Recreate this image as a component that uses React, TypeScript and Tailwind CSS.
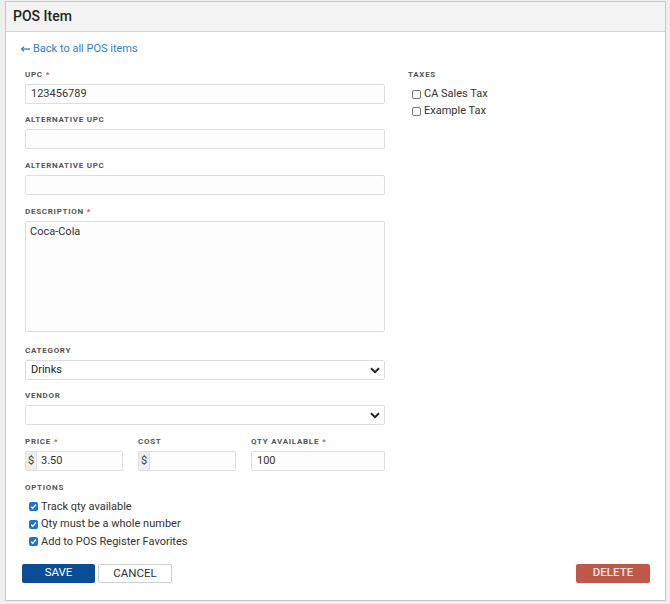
import React from "react";

const Label = ({ children, req }: { children: React.ReactNode; req?: boolean }) => (
  <div className="h-[12px] leading-[12px] text-[8px] font-bold tracking-[0.09em] text-[#555] uppercase">
    {children}
    {req && <span className="text-[#d9534f] ml-[3px]">*</span>}
  </div>
);

const Input = ({ value, className = "" }: { value?: string; className?: string }) => (
  <div
    className={`h-[20px] border border-[#dedede] bg-[#fdfdfd] rounded-[2px] flex items-center px-[5px] text-[11px] text-[#333] ${className}`}
  >
    {value}
  </div>
);

const Chevron = () => (
  <svg width="10" height="7" viewBox="0 0 10 7" className="text-[#222]">
    <path d="M1 1.3 L5 5.2 L9 1.3" fill="none" stroke="currentColor" strokeWidth="2" />
  </svg>
);

const Select = ({ value }: { value?: string }) => (
  <div className="h-[20px] border border-[#dedede] bg-white rounded-[2px] flex items-center justify-between pl-[5px] pr-[4px] text-[11px] text-[#222]">
    <span>{value}</span>
    <Chevron />
  </div>
);

const Checked = () => (
  <span className="w-[9px] h-[9px] rounded-[2px] bg-[#1a73d9] flex items-center justify-center">
    <svg width="7" height="7" viewBox="0 0 8 8">
      <path d="M1.3 4.2 L3.2 6 L6.8 1.8" fill="none" stroke="white" strokeWidth="1.6" />
    </svg>
  </span>
);

const Unchecked = () => (
  <span className="w-[9px] h-[9px] rounded-[2px] border border-[#777] bg-white" />
);

const Money = ({ value, width }: { value?: string; width: string }) => (
  <div className={`h-[20px] flex ${width}`}>
    <div className="w-[12px] h-full bg-[#eeeeee] border border-[#dedede] rounded-l-[2px] flex items-center justify-center text-[11px] text-[#444]">
      $
    </div>
    <div className="flex-1 h-full border border-l-0 border-[#dedede] bg-[#fdfdfd] rounded-r-[2px] flex items-center px-[4px] text-[11px] text-[#333]">
      {value}
    </div>
  </div>
);

export default function App() {
  return (
    <div className="w-[670px] h-[604px] bg-[#efefef] pt-[1px] pl-[5px]" style={{ fontFamily: "Roboto, 'Liberation Sans', sans-serif" }}>
      <div className="w-[661px] h-[600px] bg-white border border-[#c8c8c8] flex flex-col">
        <div className="h-[30px] bg-[#f3f3f3] border-b border-[#d2d2d2] flex items-center pl-[7px] text-[14px] font-medium text-[#222]">
          POS Item
        </div>
        <div className="px-[15px] pt-[10px] flex flex-col flex-1">
          <div className="h-[14px] leading-[14px] text-[11px] text-[#2f7fd0] flex items-center">
            <svg width="9" height="6" viewBox="0 0 9 6" className="mr-[3px]">
              <path d="M0.5 3 H9" stroke="#2f7fd0" strokeWidth="1.3" />
              <path d="M3 0.6 L0.6 3 L3 5.4" fill="none" stroke="#2f7fd0" strokeWidth="1.3" />
            </svg>
            Back to all POS items
          </div>
          <div className="flex mt-[13px] ml-[4px]">
            <div className="w-[360px] flex flex-col">
              <Label req>UPC</Label>
              <Input value="123456789" className="mt-[3px]" />
              <div className="mt-[10px]">
                <Label>Alternative UPC</Label>
                <Input className="mt-[3px]" />
              </div>
              <div className="mt-[11px]">
                <Label>Alternative UPC</Label>
                <Input className="mt-[3px]" />
              </div>
              <div className="mt-[11px]">
                <Label req>Description</Label>
                <div className="mt-[3px] h-[111px] border border-[#dedede] bg-[#fdfdfd] rounded-[2px] px-[4px] pt-[2px] text-[11px] text-[#333]">
                  Coca-Cola
                </div>
              </div>
              <div className="mt-[13px]">
                <Label>Category</Label>
                <div className="mt-[3px]">
                  <Select value="Drinks" />
                </div>
              </div>
              <div className="mt-[10px]">
                <Label>Vendor</Label>
                <div className="mt-[3px]">
                  <Select />
                </div>
              </div>
              <div className="mt-[11px] flex gap-[15px]">
                <div>
                  <Label req>Price</Label>
                  <div className="mt-[3px]">
                    <Money value="3.50" width="w-[98px]" />
                  </div>
                </div>
                <div>
                  <Label>Cost</Label>
                  <div className="mt-[3px]">
                    <Money width="w-[98px]" />
                  </div>
                </div>
                <div className="flex-1">
                  <Label req>Qty Available</Label>
                  <Input value="100" className="mt-[3px]" />
                </div>
              </div>
              <div className="mt-[11px]">
                <Label>Options</Label>
                <div className="mt-[4px] flex flex-col pl-[4px]">
                  {["Track qty available", "Qty must be a whole number", "Add to POS Register Favorites"].map((t) => (
                    <div key={t} className="h-[17.5px] flex items-center gap-[3px] text-[11px] text-[#333]">
                      <Checked />
                      <span>{t}</span>
                    </div>
                  ))}
                </div>
              </div>
            </div>
            <div className="ml-[23px] flex flex-col">
              <Label>Taxes</Label>
              <div className="mt-[5px] flex flex-col pl-[4px]">
                {["CA Sales Tax", "Example Tax"].map((t) => (
                  <div key={t} className="h-[17px] flex items-center gap-[3px] text-[11px] text-[#333]">
                    <Unchecked />
                    <span>{t}</span>
                  </div>
                ))}
              </div>
            </div>
          </div>
          <div className="mt-[13px] ml-[1px] flex items-center">
            <button className="w-[73px] h-[19px] bg-[#0b4c96] rounded-[2px] text-white text-[11.5px]">SAVE</button>
            <button className="ml-[3px] w-[74px] h-[19px] bg-white border border-[#cfcfcf] rounded-[2px] text-[#333] text-[11.5px]">
              CANCEL
            </button>
            <button className="ml-auto w-[74px] h-[19px] bg-[#c0574b] rounded-[2px] text-[#fbe3e0] text-[11.5px] font-medium">
              DELETE
            </button>
          </div>
        </div>
      </div>
    </div>
  );
}
